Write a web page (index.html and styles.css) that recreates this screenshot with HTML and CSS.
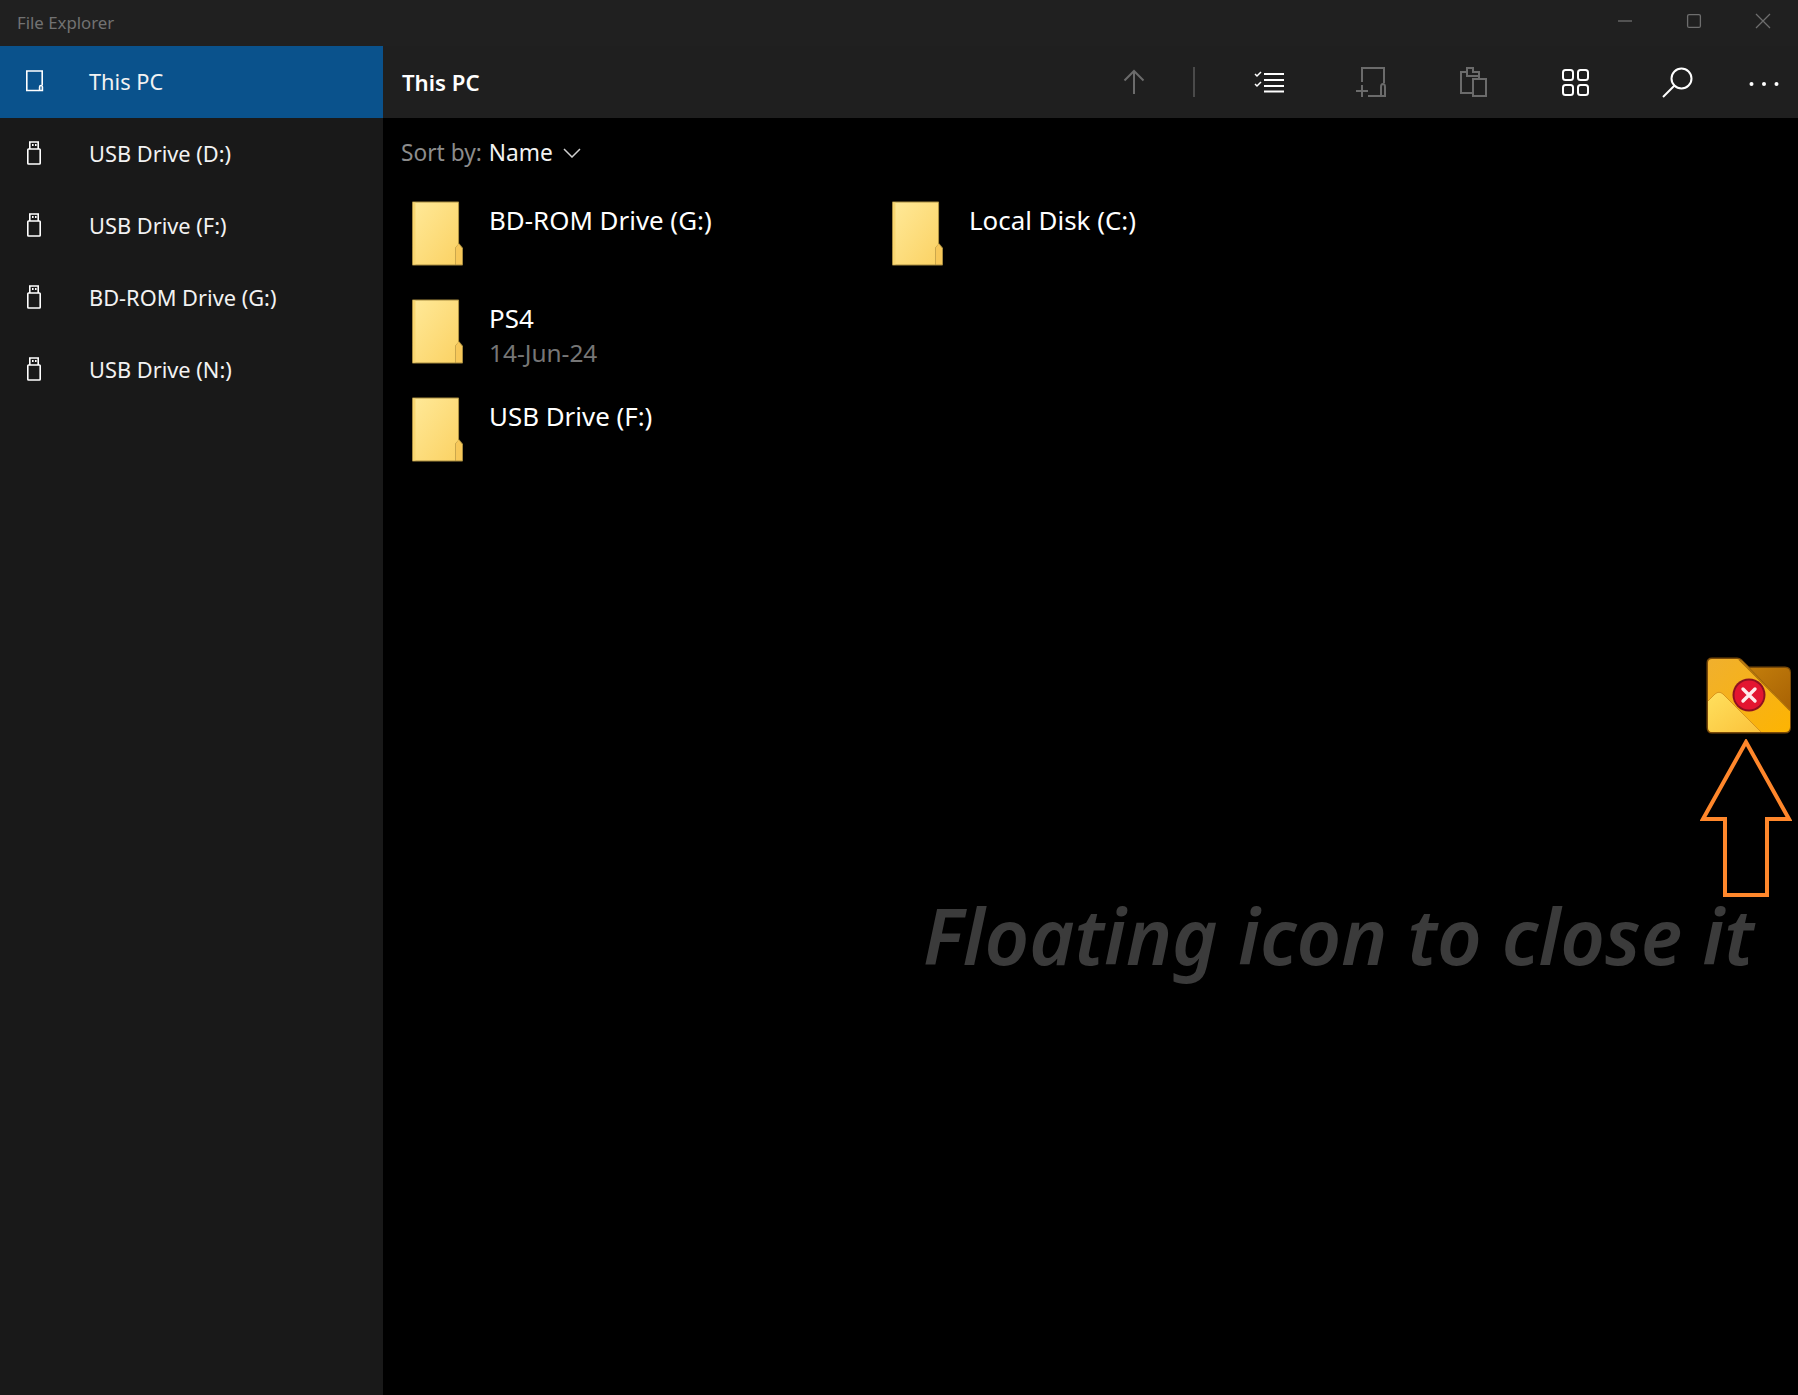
FILE: index.html
```html
<!DOCTYPE html>
<html lang="en">
<head>
    <meta charset="UTF-8">
    <title>File Explorer</title>
    <link rel="stylesheet" href="styles.css">
</head>
<body>

<div class="window">
    <div class="titlebar">
        <span class="app-title">File Explorer</span>
        <div class="window-controls">
            <span class="win-btn"><svg width="16" height="16" viewBox="0 0 16 16"><path d="M1 8h14" stroke="#6e6e6e" stroke-width="1.3"/></svg></span>
            <span class="win-btn"><svg width="16" height="16" viewBox="0 0 16 16"><rect x="1.6" y="1.6" width="12.8" height="12.8" rx="1.5" fill="none" stroke="#6e6e6e" stroke-width="1.3"/></svg></span>
            <span class="win-btn"><svg width="16" height="16" viewBox="0 0 16 16"><path d="M1 1l14 14M15 1L1 15" stroke="#6e6e6e" stroke-width="1.3"/></svg></span>
        </div>
    </div>

    <div class="body">
        <nav class="sidebar">
            <div class="nav-item active">
                <svg class="nav-icon" width="19" height="22" viewBox="0 0 19 22" fill="none" stroke="#fff" stroke-width="1.6"><path d="M14 20.5H1.8V1h15.4v14"/><path d="M14.6 20.5v-3.5q0-1.5 1.4-1.5t1.4 1.5v3.5z"/></svg>
                <span>This PC</span>
            </div>
            <div class="nav-item">
                <svg class="nav-icon" width="18" height="24" viewBox="0 0 18 24" fill="none" stroke="#fff" stroke-width="1.6"><rect x="2.8" y="8" width="12.4" height="15" rx="0.8"/><path d="M4.8 8V1h8.4v7"/><path d="M7 4h1.6M10 4h1.6" stroke-width="2"/></svg>
                <span>USB Drive (D:)</span>
            </div>
            <div class="nav-item">
                <svg class="nav-icon" width="18" height="24" viewBox="0 0 18 24" fill="none" stroke="#fff" stroke-width="1.6"><rect x="2.8" y="8" width="12.4" height="15" rx="0.8"/><path d="M4.8 8V1h8.4v7"/><path d="M7 4h1.6M10 4h1.6" stroke-width="2"/></svg>
                <span>USB Drive (F:)</span>
            </div>
            <div class="nav-item">
                <svg class="nav-icon" width="18" height="24" viewBox="0 0 18 24" fill="none" stroke="#fff" stroke-width="1.6"><rect x="2.8" y="8" width="12.4" height="15" rx="0.8"/><path d="M4.8 8V1h8.4v7"/><path d="M7 4h1.6M10 4h1.6" stroke-width="2"/></svg>
                <span>BD-ROM Drive (G:)</span>
            </div>
            <div class="nav-item">
                <svg class="nav-icon" width="18" height="24" viewBox="0 0 18 24" fill="none" stroke="#fff" stroke-width="1.6"><rect x="2.8" y="8" width="12.4" height="15" rx="0.8"/><path d="M4.8 8V1h8.4v7"/><path d="M7 4h1.6M10 4h1.6" stroke-width="2"/></svg>
                <span>USB Drive (N:)</span>
            </div>
        </nav>

        <main class="content">
            <div class="toolbar">
                <h1 class="location">This PC</h1>
                <span class="tool-btn">
                    <svg width="22" height="26" viewBox="0 0 22 26" fill="none" stroke="#6b6b6b" stroke-width="2"><path d="M11 25V2M1.5 11.5L11 2l9.5 9.5"/></svg>
                </span>
                <span class="tool-sep"></span>
                <span class="tool-btn">
                    <svg width="30" height="22" viewBox="0 0 30 22" fill="none" stroke="#fff"><path d="M10 3h20M10 9h20M10 15h20M10 20.5h20" stroke-width="2"/><path d="M1 3l2 2 4-4M1 13l2 2 4-4" stroke-width="1.5"/></svg>
                </span>
                <span class="tool-btn">
                    <svg width="30" height="30" viewBox="0 0 30 30" fill="none" stroke="#6b6b6b" stroke-width="2"><path d="M6 15V1h22v15"/><path d="M12 29h13"/><path d="M25 29v-9q0-3 2-3t2 3v9z"/><path d="M0 24h12M6 18v12"/></svg>
                </span>
                <span class="tool-btn">
                    <svg width="27" height="30" viewBox="0 0 27 30" fill="none" stroke="#6b6b6b" stroke-width="2"><path d="M13 26H1V5h6V1h6v4h6v7"/><path d="M7 5v4h12"/><rect x="13" y="12" width="13" height="17"/></svg>
                </span>
                <span class="tool-btn">
                    <svg width="27" height="27" viewBox="0 0 27 27" fill="none" stroke="#fff" stroke-width="2"><rect x="1" y="1" width="10" height="10" rx="2.5"/><rect x="16" y="1" width="10" height="10" rx="2.5"/><rect x="1" y="16" width="10" height="10" rx="2.5"/><rect x="16" y="16" width="10" height="10" rx="2.5"/></svg>
                </span>
                <span class="tool-btn">
                    <svg width="31" height="31" viewBox="0 0 31 31" fill="none" stroke="#fff" stroke-width="2"><circle cx="19.5" cy="11.5" r="10"/><path d="M12.5 18.5L1 30"/></svg>
                </span>
                <span class="tool-btn more">
                    <svg width="30" height="6" viewBox="0 0 30 6" fill="#fff"><circle cx="2.5" cy="3" r="2"/><circle cx="15" cy="3" r="2"/><circle cx="27.5" cy="3" r="2"/></svg>
                </span>
            </div>

            <div class="sort-bar">
                <span class="sort-label">Sort by:</span>
                <span class="sort-value">Name</span>
                <svg width="18" height="10" viewBox="0 0 18 10" fill="none" stroke="#d0d0d0" stroke-width="1.5"><path d="M1 1l8 8 8-8"/></svg>
            </div>

            <div class="file-grid">
                <div class="file-item">
                    <svg class="folder" viewBox="0 0 52 64" preserveAspectRatio="none"><use href="#folder-shape"/></svg>
                    <div class="file-name">BD-ROM Drive (G:)</div>
                </div>
                <div class="file-item">
                    <svg class="folder" viewBox="0 0 52 64" preserveAspectRatio="none"><use href="#folder-shape"/></svg>
                    <div class="file-name">Local Disk (C:)</div>
                </div>
                <div class="file-item">
                    <svg class="folder" viewBox="0 0 52 64" preserveAspectRatio="none"><use href="#folder-shape"/></svg>
                    <div>
                        <div class="file-name">PS4</div>
                        <div class="file-date">14-Jun-24</div>
                    </div>
                </div>
                <div class="file-item"></div>
                <div class="file-item">
                    <svg class="folder" viewBox="0 0 52 64" preserveAspectRatio="none"><use href="#folder-shape"/></svg>
                    <div class="file-name">USB Drive (F:)</div>
                </div>
            </div>
        </main>
    </div>

    <!-- annotation on top of the screenshot -->
    <svg class="float-icon" width="86" height="77" viewBox="0 0 86 77">
        <defs>
            <linearGradient id="backFold" x1="0.2" y1="0" x2="1" y2="1"><stop offset="0" stop-color="#c47f0c"/><stop offset="1" stop-color="#a86204"/></linearGradient>
            <linearGradient id="frontFold" x1="0" y1="0" x2="1" y2="1"><stop offset="0" stop-color="#f0b02e"/><stop offset="1" stop-color="#fdb402"/></linearGradient>
            <linearGradient id="lightFold" x1="0" y1="0" x2="1" y2="1"><stop offset="0" stop-color="#ffe05e"/><stop offset="1" stop-color="#fbc23a"/></linearGradient>
        </defs>
        <path d="M6 .5h25q3 0 5 2l7 7h36q6 0 6 6v55q0 6-6 6H6q-5.5 0-5.5-6V6q0-5.5 5.5-5.500z" fill="#7a4a08"/>
        <path d="M37 4l7 7h35q5 0 5 5v37z" fill="url(#backFold)"/>
        <path d="M6 2h25q3 0 5 2l48 49v17q0 5-5 5H6q-4 0-4-5V6q0-4 4-4z" fill="url(#frontFold)"/>
        <path d="M33 2.5l51 51" stroke="#a86a0a" stroke-width="1.2" fill="none"/>
        <path d="M2 44l7-7q4-3.5 8 0l38 38H6q-4 0-4-5z" fill="url(#lightFold)"/>
        <path d="M2 44l7-7q4-3.5 8 0l38 38" stroke="#d9951c" stroke-width="1" fill="none"/>
        <circle cx="43" cy="38" r="16.5" fill="#8f1020"/>
        <circle cx="43" cy="38" r="14.5" fill="#e31530"/>
        <path d="M37 32l12 12M49 32L37 44" stroke="#ffeaea" stroke-width="3.4" stroke-linecap="round"/>
    </svg>
    <svg class="float-arrow" width="92" height="158" viewBox="0 0 92 158" fill="none" stroke="#ff872b" stroke-width="4"><path d="M46 3l43 77H67v76H25V80H3z"/></svg>
    <div class="float-note">Floating icon to close it</div>
</div>

<svg class="defs" width="0" height="0">
    <defs>
        <linearGradient id="folderFill" x1="0" y1="0" x2="1" y2="1"><stop offset="0" stop-color="#ffe998"/><stop offset="1" stop-color="#fbd264"/></linearGradient>
        <symbol id="folder-shape" viewBox="0 0 52 64" preserveAspectRatio="none">
            <path d="M1 0.5h46q1 0 1 1v40l3.5 4q.5 .5 .5 1.5v15.5q0 1-1 1H1q-1 0-1-1V1.5q0-1 1-1z" fill="#a58a3f"/>
            <path d="M1 1.5h46v41l-3 3.5v16.5H1z" fill="url(#folderFill)"/>
            <path d="M1 1.5h2.5v61H1z" fill="#f8d670"/>
            <path d="M44.5 46l3-4 3.5 4.5v16H44.5z" fill="#f7c85a"/>
        </symbol>
    </defs>
</svg>

</body>
</html>
```

FILE: styles.css
```css
* {
    box-sizing: border-box;
}

body {
    margin: 0;
    background-color: #000;
    font-family: "Noto Sans", sans-serif;
    color: #fff;
}

.defs {
    position: absolute;
}

.window {
    position: relative;
    width: 1798px;
    height: 1395px;
    overflow: hidden;
    display: flex;
    flex-direction: column;
}

.titlebar {
    height: 46px;
    background-color: #202020;
    display: flex;
    align-items: center;
    justify-content: space-between;
    flex-shrink: 0;
}

.app-title {
    margin-left: 17px;
    margin-bottom: 2px;
    font-size: 16.8px;
    color: #727272;
}

.window-controls {
    display: flex;
    margin-top: -4px;
    margin-right: 1px;
}

.win-btn {
    width: 69px;
    display: flex;
    justify-content: center;
}

.body {
    flex: 1;
    display: flex;
}

.sidebar {
    width: 383px;
    background-color: #191919;
    flex-shrink: 0;
}

.nav-item {
    height: 72px;
    padding-bottom: 2px;
    display: flex;
    align-items: center;
    font-size: 21.8px;
    color: #f2f2f2;
}

.nav-icon {
    margin-left: 25px;
    margin-right: 46px;
    flex-shrink: 0;
}

.nav-item.active {
    background-color: #0a528c;
}

.nav-item.active .nav-icon {
    margin-right: 45px;
}

.content {
    flex: 1;
    background-color: #000;
}

.toolbar {
    height: 72px;
    background-color: #1f1f1f;
    display: flex;
    align-items: center;
}

.location {
    margin: 0 0 0 19px;
    font-size: 22.2px;
    font-weight: 600;
    flex: 1;
}

.tool-btn {
    width: 102px;
    height: 72px;
    display: flex;
    align-items: center;
    justify-content: center;
    flex-shrink: 0;
}

.tool-btn.more {
    width: 68px;
    margin-left: 2px;
    padding-top: 4px;
}

.tool-sep {
    width: 2px;
    height: 30px;
    margin: 0 23px 0 8px;
    background-color: #4a4a4a;
}

.sort-bar {
    height: 63px;
    padding: 6px 0 0 18px;
    display: flex;
    align-items: center;
    gap: 7px;
    font-size: 22.7px;
}

.sort-label {
    color: #8c8c8c;
}

.sort-value {
    color: #f2f2f2;
    margin-right: 3px;
}

.file-grid {
    display: grid;
    grid-template-columns: 480px 480px;
    grid-auto-rows: 98px;
    padding-left: 29px;
    padding-top: 21px;
}

.file-item {
    display: flex;
    align-items: flex-start;
    gap: 26px;
}

.folder {
    width: 51px;
    height: 65px;
    margin-top: -1px;
    flex-shrink: 0;
}

.file-name {
    font-size: 25.9px;
    line-height: 36px;
    color: #fff;
}

.file-date {
    font-size: 24.4px;
    line-height: 34px;
    color: #767676;
}

.float-icon {
    position: absolute;
    left: 1706px;
    top: 657px;
}

.float-arrow {
    position: absolute;
    left: 1700px;
    top: 739px;
}

.float-note {
    position: absolute;
    left: 923px;
    top: 880px;
    font-size: 77.5px;
    font-weight: 600;
    font-style: italic;
    line-height: 110px;
    color: #3b3b3b;
    white-space: nowrap;
}
```
